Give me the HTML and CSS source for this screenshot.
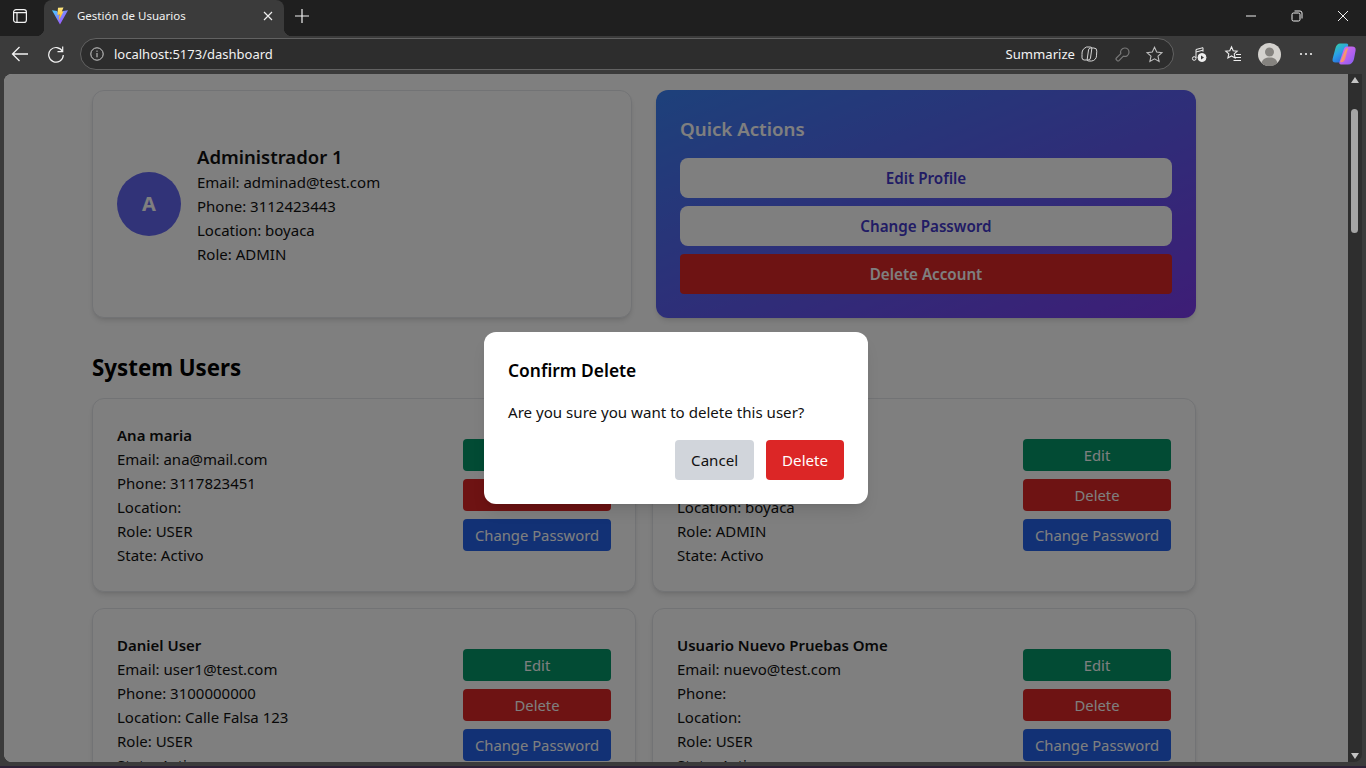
FILE: index.html
```html
<!DOCTYPE html>
<html lang="es">
<head>
  <meta charset="UTF-8">
  <meta name="viewport" content="width=device-width, initial-scale=1.0">
  <title>Gestión de Usuarios</title>
  <link rel="stylesheet" href="styles.css">
</head>
<body>
  <!-- Browser tab strip -->
  <div class="tabstrip">
    <div class="tab-menu">
      <svg width="16" height="16" viewBox="0 0 16 16" fill="none" stroke="#f2f2f2" stroke-width="1.2"><rect x="1.6" y="1.6" width="12.8" height="12.8" rx="2.5"/><path d="M2 4.600h12M5 4.600V14" /></svg>
    </div>
    <div class="tab">
      <svg class="tab-logo" width="18" height="18" viewBox="0 0 18 18"><defs><linearGradient id="vite1" x1="0" y1="0" x2="1" y2="1"><stop offset="0" stop-color="#41d1ff"/><stop offset="1" stop-color="#bd34fe"/></linearGradient><linearGradient id="vite2" x1="0" y1="0" x2="0" y2="1"><stop offset="0" stop-color="#ffea83"/><stop offset="1" stop-color="#ffa800"/></linearGradient></defs><path d="M1 3.200 9 17.500 17 3.200 12 4 9 9 6 4z" fill="url(#vite1)"/><path d="M7 .8 12.500.5 10.800 4.600 12.600 4.300 7.800 13.500 8.600 7.600 6.400 8z" fill="url(#vite2)"/></svg>
      <span class="tab-title">Gestión de Usuarios</span>
      <svg class="tab-close" width="10" height="10" viewBox="0 0 10 10" stroke="#eee" stroke-width="1.2"><path d="M1 1l8 8M9 1l-8 8"/></svg>
    </div>
    <svg class="new-tab" width="14" height="14" viewBox="0 0 14 14" stroke="#f2f2f2" stroke-width="1.2"><path d="M7 0v14M0 7h14"/></svg>
    <div class="window-controls">
      <svg width="12" height="12" viewBox="0 0 12 12" stroke="#eee" stroke-width="1"><path d="M1 6h10"/></svg>
      <svg width="12" height="12" viewBox="0 0 12 12" fill="none" stroke="#eee" stroke-width="1"><rect x="1" y="3" width="8" height="8" rx="1.5"/><path d="M3.500 1h5.500a2 2 0 0 1 2 2v5.500"/></svg>
      <svg width="12" height="12" viewBox="0 0 12 12" stroke="#eee" stroke-width="1"><path d="M1 1l10 10M11 1L1 11"/></svg>
    </div>
  </div>

  <!-- Browser toolbar -->
  <div class="toolbar">
    <svg class="nav-back" width="18" height="18" viewBox="0 0 18 18" fill="none" stroke="#f2f2f2" stroke-width="1.3"><path d="M17 9H1.500M8.500 2 1.500 9l7 7"/></svg>
    <svg class="nav-reload" width="18" height="18" viewBox="0 0 18 18" fill="none" stroke="#f2f2f2" stroke-width="1.2"><path d="M15.500 6.500A7.300 7.300 0 1 0 16.300 10"/><path d="M15.700 1.500v5.200h-5.200"/></svg>
    <div class="address">
      <svg width="14" height="14" viewBox="0 0 14 14" fill="none" stroke="#cfcfcf" stroke-width="1"><circle cx="7" cy="7" r="6.200"/><path d="M7 6v4.300M7 3.600v1.200"/></svg>
      <span class="url">localhost:5173/dashboard</span>
      <span class="summarize">Summarize</span>
      <svg class="addr-copilot" width="17" height="16" viewBox="0 0 17 16" fill="none" stroke="#d6d6d6" stroke-width="1"><path d="M5.500 1h3.800a1.500 1.500 0 0 1 1.500 1.700L9.500 12a2.400 2.400 0 0 1-2.400 2H3.200A2.300 2.300 0 0 1 1 11.800V8.500A7.500 7.500 0 0 1 5.500 1z"/><path d="M9.500 2h3.300a3 3 0 0 1 3 3.200l-.3 4A5.300 5.300 0 0 1 10.500 15H7.700a1.500 1.500 0 0 1-1.500-1.700L7.500 4a2.400 2.400 0 0 1 2-2z"/></svg>
      <svg class="addr-key" width="15" height="15" viewBox="0 0 15 15" fill="none" stroke="#777" stroke-width="1.200"><path d="M9.800 1a4.200 4.200 0 0 1 4.200 4.200 4.200 4.200 0 0 1-5.600 4L4 13.600a1.200 1.200 0 0 1-1.800 0l-.8-.8a1.200 1.200 0 0 1 0-1.800L5.800 6.600A4.200 4.200 0 0 1 9.800 1z"/></svg>
      <svg class="addr-star" width="17" height="17" viewBox="0 0 17 17" fill="none" stroke="#bdbdbd" stroke-width="1.100"><path d="M8.500 1.300l2.200 4.800 5.200.6-3.900 3.500 1.100 5.200-4.600-2.600-4.600 2.600 1.100-5.200L1.100 6.700l5.200-.6z"/></svg>
    </div>
    <svg class="tool-icon" width="16" height="18" viewBox="0 0 16 18" fill="none" stroke="#eee" stroke-width="1"><path d="M5 13V4.500l7-1.800v4M5 7l7-1.800"/><circle cx="3.200" cy="13.500" r="1.800"/><circle cx="11" cy="12.500" r="4" fill="#eee"/><path d="M10 10.500v4l3-2z" fill="#3b3b3b" stroke="none"/></svg>
    <svg class="tool-icon" width="18" height="18" viewBox="0 0 18 18" fill="none" stroke="#eee" stroke-width="1.100"><path d="M7.500 1.800l1.700 4 4 .4-3 2.700.9 4.100-3.600-2.100L3.900 13l.9-4.100-3-2.700 4-.4z"/><path d="M12 9.500h5M11 12.500h6M9.500 15.500h7.500"/></svg>
    <div class="profile">
      <svg width="23" height="23" viewBox="0 0 23 23"><circle cx="11.500" cy="11.500" r="11.500" fill="#d4d2ce"/><circle cx="11.500" cy="9" r="4.500" fill="#85837f"/><path d="M3.500 20c1-4 4-5.500 8-5.500s7 1.500 8 5.500a11.500 11.500 0 0 1-16 0z" fill="#85837f"/></svg>
    </div>
    <svg class="more" width="14" height="4" viewBox="0 0 14 4" fill="#eee"><circle cx="2" cy="2" r="1.100"/><circle cx="7" cy="2" r="1.100"/><circle cx="12" cy="2" r="1.100"/></svg>
    <svg class="copilot" width="24" height="22" viewBox="0 0 24 22"><defs><linearGradient id="cop1" x1="0.100" y1="0" x2="0.700" y2="1"><stop offset="0" stop-color="#35d0a0"/><stop offset="0.5" stop-color="#2aa0e8"/><stop offset="1" stop-color="#2b5fd8"/></linearGradient><linearGradient id="cop2" x1="0" y1="0" x2="1" y2="1"><stop offset="0" stop-color="#e070e0"/><stop offset="0.6" stop-color="#b060f0"/><stop offset="1" stop-color="#7a60f0"/></linearGradient><linearGradient id="cop3" x1="0" y1="0" x2="1" y2="1"><stop offset="0" stop-color="#f7d040"/><stop offset="1" stop-color="#f0609a"/></linearGradient></defs><path d="M8 .5h6.500c1.500 0 2 1 1.500 2.500L12 16c-.7 2.300-2.500 3.500-4.500 3.500H3.500C1 19.500 0 18 .7 15.500L3.500 5C4.300 2 6 .5 8 .5z" fill="url(#cop1)"/><path d="M15 3.500h5c2.800 0 4 1.500 3.600 4l-1.600 8.500c-.7 3.500-3 5.500-6 5.500H9c-1.500 0-2-1-1.500-2.500L11.500 7C12.200 4.700 13 3.500 15 3.500z" fill="url(#cop2)"/><path d="M13 7.500c.6-1.500 1.600-2.500 3-2.500l-2.800 11c-.6 2-1.700 3-3.500 3.300l-1.500-.3z" fill="url(#cop3)"/></svg>
  </div>

  <!-- Page viewport -->
  <div class="viewport">
    <div class="page">
      <main class="dashboard">
        <section class="top-row">
          <div class="card profile-card">
            <div class="avatar">A</div>
            <div>
              <h2 class="profile-name">Administrador 1</h2>
              <p>Email: adminad@test.com</p>
              <p>Phone: 3112423443</p>
              <p>Location: boyaca</p>
              <p>Role: ADMIN</p>
            </div>
          </div>
          <div class="quick-actions">
            <h2>Quick Actions</h2>
            <button class="qa-btn qa-light">Edit Profile</button>
            <button class="qa-btn qa-light">Change Password</button>
            <button class="qa-btn qa-danger">Delete Account</button>
          </div>
        </section>

        <h2 class="section-title">System Users</h2>

        <section class="users">
          <div class="card user-card">
            <div>
              <h3>Ana maria</h3>
              <p>Email: ana@mail.com</p>
              <p>Phone: 3117823451</p>
              <p>Location:</p>
              <p>Role: USER</p>
              <p>State: Activo</p>
            </div>
            <div class="user-actions">
              <button class="btn btn-edit">Edit</button>
              <button class="btn btn-delete">Delete</button>
              <button class="btn btn-pass">Change Password</button>
            </div>
          </div>
          <div class="card user-card">
            <div>
              <h3>Administrador 1</h3>
              <p>Email: adminad@test.com</p>
              <p>Phone: 3112423443</p>
              <p>Location: boyaca</p>
              <p>Role: ADMIN</p>
              <p>State: Activo</p>
            </div>
            <div class="user-actions">
              <button class="btn btn-edit">Edit</button>
              <button class="btn btn-delete">Delete</button>
              <button class="btn btn-pass">Change Password</button>
            </div>
          </div>
          <div class="card user-card">
            <div>
              <h3>Daniel User</h3>
              <p>Email: user1@test.com</p>
              <p>Phone: 3100000000</p>
              <p>Location: Calle Falsa 123</p>
              <p>Role: USER</p>
              <p>State: Activo</p>
            </div>
            <div class="user-actions">
              <button class="btn btn-edit">Edit</button>
              <button class="btn btn-delete">Delete</button>
              <button class="btn btn-pass">Change Password</button>
            </div>
          </div>
          <div class="card user-card">
            <div>
              <h3>Usuario Nuevo Pruebas Ome</h3>
              <p>Email: nuevo@test.com</p>
              <p>Phone:</p>
              <p>Location:</p>
              <p>Role: USER</p>
              <p>State: Activo</p>
            </div>
            <div class="user-actions">
              <button class="btn btn-edit">Edit</button>
              <button class="btn btn-delete">Delete</button>
              <button class="btn btn-pass">Change Password</button>
            </div>
          </div>
        </section>
      </main>

      <div class="overlay">
        <div class="modal">
          <h3>Confirm Delete</h3>
          <p>Are you sure you want to delete this user?</p>
          <div class="modal-actions">
            <button class="modal-btn modal-cancel">Cancel</button>
            <button class="modal-btn modal-delete">Delete</button>
          </div>
        </div>
      </div>
    </div>

    <div class="scrollbar">
      <span class="arrow-up"></span>
      <div class="thumb"></div>
      <span class="arrow-down"></span>
    </div>
  </div>
  <div class="taskbar-edge"></div>
</body>
</html>
```

FILE: styles.css
```css
/* Reset */
body, h2, h3, p, button {
  margin: 0;
  padding: 0;
  box-sizing: border-box;
}

body {
  font-family: 'Noto Sans', sans-serif;
  font-size: 15px;
  background-color: #3b3b3b;
  height: 100vh;
  overflow: hidden;
  display: flex;
  flex-direction: column;
}

/* Browser tab strip */
.tabstrip {
  height: 36px;
  padding-bottom: 5px;
  box-sizing: border-box;
  flex: none;
  background-color: #1f1f1f;
  display: flex;
  align-items: center;
  color: #f2f2f2;
}

.tab-menu {
  width: 44px;
  flex: none;
  display: flex;
  justify-content: center;
  padding-right: 4px;
  box-sizing: border-box;
}

.tab {
  width: 240px;
  height: 36px;
  margin-bottom: -5px;
  padding: 0 11px 5px 7px;
  flex: none;
  background-color: #3b3b3b;
  border-radius: 8px 8px 0 0;
  display: flex;
  align-items: center;
  box-sizing: border-box;
  position: relative;
}

/* small curves where the tab meets the toolbar */
.tab::before,
.tab::after {
  content: "";
  position: absolute;
  bottom: 0;
  width: 8px;
  height: 8px;
}

.tab::before {
  left: -8px;
  background-image: radial-gradient(circle at 0 0, #1f1f1f 8px, #3b3b3b 8.5px);
}

.tab::after {
  right: -8px;
  background-image: radial-gradient(circle at 100% 0, #1f1f1f 8px, #3b3b3b 8.5px);
}

.tab-logo {
  margin-right: 8px;
}

.tab-title {
  font-size: 11.5px;
  flex: 1;
}

.new-tab {
  margin-left: 11px;
}

.window-controls {
  margin-left: auto;
  width: 138px;
  display: flex;
  justify-content: space-between;
  padding: 0 17px;
  box-sizing: border-box;
}

/* Browser toolbar */
.toolbar {
  height: 38px;
  padding-bottom: 2px;
  box-sizing: border-box;
  flex: none;
  background-color: #3b3b3b;
  display: flex;
  align-items: center;
}

.nav-back {
  margin-left: 11px;
}

.nav-reload {
  margin-left: 18px;
}

.address {
  width: 1094px;
  height: 32px;
  margin-left: 15px;
  flex: none;
  border: 1px solid #626262;
  border-radius: 16px;
  background-color: #2d2d2d;
  display: flex;
  align-items: center;
  padding: 0 10px 0 9px;
  box-sizing: border-box;
  color: #f2f2f2;
}

.url {
  font-size: 13px;
  margin-left: 10px;
  flex: 1;
}

.summarize {
  font-size: 13.1px;
}

.addr-copilot {
  margin-left: 6px;
}

.addr-key {
  margin-left: 17px;
}

.addr-star {
  margin-left: 16px;
}

.tool-icon {
  margin-left: 17px;
}

.profile {
  margin-left: 16px;
  display: flex;
}

.more {
  margin-left: 18px;
}

.copilot {
  margin-left: 19px;
}

/* Page viewport */
.viewport {
  height: 688px;
  flex: none;
  margin: 0 4px;
  display: flex;
  border-radius: 8px 0 8px 8px;
  overflow: hidden;
}

.page {
  flex: 1;
  position: relative;
  overflow: hidden;
  background-color: #fff;
  color: #111;
  line-height: 24px;
}

.scrollbar {
  width: 14px;
  flex: none;
  background-color: #2e2e2e;
  position: relative;
}

.thumb {
  width: 7px;
  height: 124px;
  margin: 35px 0 0 3px;
  border-radius: 4px;
  background-color: #a5a5a5;
}

.arrow-up,
.arrow-down {
  position: absolute;
  left: 3px;
  border-left: 4px solid transparent;
  border-right: 4px solid transparent;
}

.arrow-up {
  top: 3px;
  border-bottom: 6px solid #c4c4c4;
}

.arrow-down {
  bottom: 3px;
  border-top: 6px solid #c4c4c4;
}

.taskbar-edge {
  height: 2px;
  margin-top: 4px;
  background-color: #2d2136;
  flex: none;
}

/* Dashboard */
.dashboard {
  width: 1104px;
  margin-left: 88px;
  padding-top: 16px;
}

.top-row {
  display: grid;
  grid-template-columns: 1fr 1fr;
  gap: 24px;
}

.card {
  background-color: #fff;
  border: 1px solid #e5e7eb;
  border-radius: 12px;
  box-shadow: 0 4px 6px -1px rgba(0, 0, 0, 0.1), 0 2px 4px -2px rgba(0, 0, 0, 0.1);
  box-sizing: border-box;
}

.profile-card {
  padding: 24px;
  display: flex;
  align-items: center;
  gap: 16px;
}

.avatar {
  width: 64px;
  height: 64px;
  border-radius: 50%;
  background-color: #6366f1;
  color: #fff;
  font-size: 20px;
  font-weight: 700;
  display: flex;
  align-items: center;
  justify-content: center;
}

.profile-name {
  font-size: 18.5px;
  font-weight: 600;
  line-height: 30px;
  margin-bottom: -2px;
}

.quick-actions {
  padding: 24px;
  border-radius: 12px;
  background-image: linear-gradient(to bottom right, #3b82f6, #7c3aed);
  box-shadow: 0 4px 6px -1px rgba(0, 0, 0, 0.1), 0 2px 4px -2px rgba(0, 0, 0, 0.1);
  display: flex;
  flex-direction: column;
  gap: 8px;
}

.quick-actions h2 {
  color: #fff;
  font-size: 18.7px;
  font-weight: 600;
  line-height: 30px;
  margin-bottom: 6px;
}

.qa-btn {
  height: 40px;
  border: none;
  font-family: inherit;
  font-size: 15.2px;
  font-weight: 600;
  border-radius: 8px;
}

.qa-light {
  background-color: #fff;
  color: #4338ca;
}

.qa-danger {
  background-color: #dc2626;
  color: #fff;
  border-radius: 4px;
}

.section-title {
  font-size: 22.3px;
  font-weight: 700;
  line-height: 32px;
  color: #000;
  margin: 34px 0 14px;
}

/* User cards */
.users {
  display: grid;
  grid-template-columns: 1fr 1fr;
  gap: 16px;
}

.user-card {
  padding: 24px;
  display: flex;
  justify-content: space-between;
  align-items: center;
}

.user-card h3 {
  font-size: 15px;
  font-weight: 600;
  line-height: 24px;
}

.user-actions {
  width: 148px;
  display: flex;
  flex-direction: column;
  gap: 8px;
}

.btn {
  height: 32px;
  border: none;
  border-radius: 4px;
  color: #fff;
  font-family: inherit;
  font-size: 14.8px;
}

.btn-edit {
  background-color: #059669;
}

.btn-delete {
  background-color: #dc2626;
}

.btn-pass {
  background-color: #2563eb;
}

/* Confirm modal */
.overlay {
  position: absolute;
  inset: 0;
  background-color: rgba(0, 0, 0, 0.5);
  display: flex;
  align-items: center;
  justify-content: center;
}

.modal {
  width: 384px;
  padding: 24px;
  box-sizing: border-box;
  background-color: #fff;
  border-radius: 12px;
  box-shadow: 0 10px 15px -3px rgba(0, 0, 0, 0.1), 0 4px 6px -4px rgba(0, 0, 0, 0.1);
}

.modal h3 {
  font-size: 17.4px;
  font-weight: 600;
  line-height: 28px;
  color: #000;
  margin-bottom: 16px;
}

.modal p {
  font-size: 15.1px;
  margin-bottom: 16px;
}

.modal-actions {
  display: flex;
  justify-content: flex-end;
  gap: 12px;
}

.modal-btn {
  height: 40px;
  padding: 0 16px;
  border: none;
  border-radius: 4px;
  font-family: inherit;
  font-size: 15.1px;
}

.modal-cancel {
  background-color: #d1d5db;
  color: #111;
}

.modal-delete {
  background-color: #dc2626;
  color: #fff;
}
```
